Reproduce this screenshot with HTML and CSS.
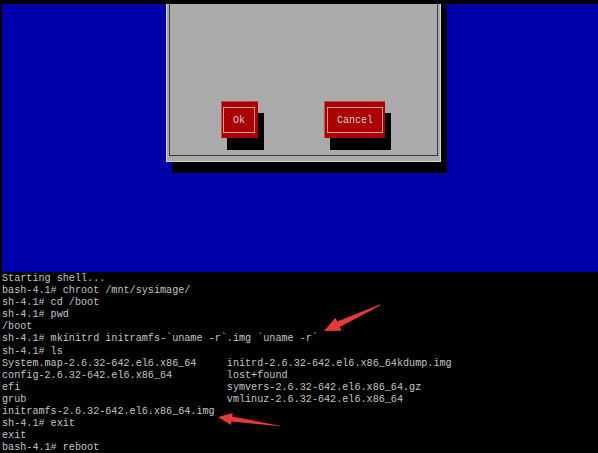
FILE: index.html
```html
<!DOCTYPE html>
<html lang="en">
<head>
    <meta charset="UTF-8">
    <meta name="viewport" content="width=device-width, initial-scale=1.0">
    <title>Rescue Shell</title>
    <link rel="stylesheet" href="styles.css">
</head>
<body>
    <div class="screen">
        <div class="desktop">
            <div class="dialog">
                <div class="dialog-frame">
                    <div class="buttons">
                        <div class="tui-btn ok"><span>Ok</span></div>
                        <div class="tui-btn cancel"><span>Cancel</span></div>
                    </div>
                </div>
            </div>
        </div>
        <pre class="terminal">Starting shell...
bash-4.1# chroot /mnt/sysimage/
sh-4.1# cd /boot
sh-4.1# pwd
/boot
sh-4.1# mkinitrd initramfs-`uname -r`.img `uname -r`
sh-4.1# ls
System.map-2.6.32-642.el6.x86_64     initrd-2.6.32-642.el6.x86_64kdump.img
config-2.6.32-642.el6.x86_64         lost+found
efi                                  symvers-2.6.32-642.el6.x86_64.gz
grub                                 vmlinuz-2.6.32-642.el6.x86_64
initramfs-2.6.32-642.el6.x86_64.img
sh-4.1# exit
exit
bash-4.1# reboot</pre>

        <!-- annotation arrows drawn over the screenshot -->
        <svg class="arrows" width="598" height="453" viewBox="0 0 598 453">
            <polygon points="380.2,305.4 339.8,327.0 341.6,330.8 324,331 335.4,317.8 337.2,321.6 379.8,304.6" fill="#e63a3a"/>
            <polygon points="280,426.3 231.5,421.5 231,425 218,417 232.8,413 232.3,416.5 280,425.7" fill="#e63a3a"/>
        </svg>
    </div>
</body>
</html>
```

FILE: styles.css
```css
* {
    margin: 0;
    padding: 0;
    box-sizing: border-box;
}
body {
    background: #000;
    width: 598px;
    height: 453px;
    overflow: hidden;
    font-family: "Liberation Mono", "DejaVu Sans Mono", monospace;
}
.screen {
    position: relative;
    width: 598px;
    height: 453px;
    padding-top: 4px;
    padding-left: 2px;
    display: flex;
    flex-direction: column;
}
.desktop {
    height: 268px;
    background: #0000aa;
    overflow: hidden;
    flex-shrink: 0;
}
/* newt style dialog, its top runs off the screen */
.dialog {
    width: 275px;
    margin-left: 164px;
    margin-top: -10px;
    background: #aaaaaa;
    border: 1px solid #d2d2d2;
    padding: 2px 2px 5px 2px;
    box-shadow: 6px 11px 0 #000;
}
.dialog-frame {
    border: 1px solid #3c3c3c;
    padding: 103px 0 17px 0;
}
.buttons {
    display: flex;
    gap: 66px;
    padding-left: 51px;
}
.tui-btn {
    height: 37px;
    background: #aa0000;
    border-top: 1px solid #c44a4a;
    border-left: 1px solid #c44a4a;
    box-shadow: 6px 12px 0 #000;
    padding: 5px 3px 5px 1px;
    display: flex;
}
.tui-btn.ok {
    width: 37px;
}
.tui-btn.cancel {
    width: 61px;
    padding-left: 2px;
    padding-right: 2px;
}
.tui-btn span {
    flex: 1;
    border: 1px solid #d89c9c;
    color: #cfcfcf;
    font-size: 10px;
    display: flex;
    align-items: center;
    justify-content: center;
}
.terminal {
    padding-top: 1px;
    font-family: "Liberation Mono", "DejaVu Sans Mono", monospace;
    font-size: 10.13px;
    line-height: 12.1px;
    color: #c4c4c4;
    white-space: pre;
}
.arrows {
    position: absolute;
    left: 0;
    top: 0;
    pointer-events: none;
}
```
